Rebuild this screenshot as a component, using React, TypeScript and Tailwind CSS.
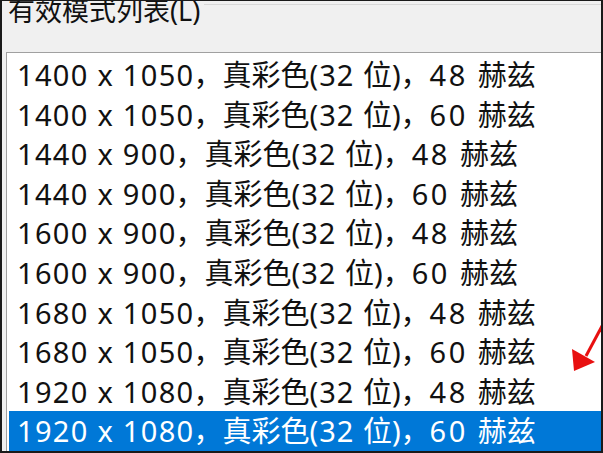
import React from "react";

const modes = [
  ["1400 x 1050", "48"],
  ["1400 x 1050", "60"],
  ["1440 x 900", "48"],
  ["1440 x 900", "60"],
  ["1600 x 900", "48"],
  ["1600 x 900", "60"],
  ["1680 x 1050", "48"],
  ["1680 x 1050", "60"],
  ["1920 x 1080", "48"],
  ["1920 x 1080", "60"],
];

export default function App() {
  const selected = 9;
  return (
    <div
      className="w-[603px] h-[453px] overflow-hidden bg-[#f0f0f0] border-t border-l-[2px] border-r-[2px] border-b-[2px] border-[#1a1a1a] flex flex-col"
      style={{ fontFamily: '"Noto Sans", "Noto Sans CJK SC", sans-serif' }}
    >
      {/* group header */}
      <div className="flex items-start h-[10px] ml-[6px] overflow-visible">
        <span className="text-[27px] leading-[30px] -mt-[5px] text-[#111] whitespace-nowrap">
          有效模式列表(L)
        </span>
        <div className="flex-1 h-px bg-[#d8d8d8] mt-[3px] ml-[4px]" />
      </div>

      {/* list box */}
      <div className="relative mt-[41px] ml-[4px] flex-1 bg-white border-t border-l border-[#a0a0a0] pt-[2px] pl-[2px]">
        {modes.map(([res, hz], i) => (
          <div
            key={i}
            className={`h-[39.6px] flex items-center pl-[8px] text-[29px] ${
              i === selected ? "bg-[#0078d7] text-white" : "text-[#111]"
            }`}
          >
            <span className="whitespace-pre">
              <span className="tracking-[1.3px]">{res}</span>
              <span className="-ml-[1px]">，真彩色</span>
              <span className="tracking-[1px]">(32 </span>
              <span>位</span>
              <span>)，</span>
              <span className="tracking-[2.5px]">{hz} </span>
              <span>赫兹</span>
            </span>
          </div>
        ))}

        {/* red annotation arrow */}
        <svg
          className="absolute left-[559px] top-[265px]"
          width="44"
          height="56"
          viewBox="0 0 44 56"
        >
          <line x1="42" y1="-3" x2="20" y2="38" stroke="#e81010" strokeWidth="3" />
          <polygon points="6,31 8,53 29,44" fill="#e81010" />
        </svg>
      </div>
    </div>
  );
}
